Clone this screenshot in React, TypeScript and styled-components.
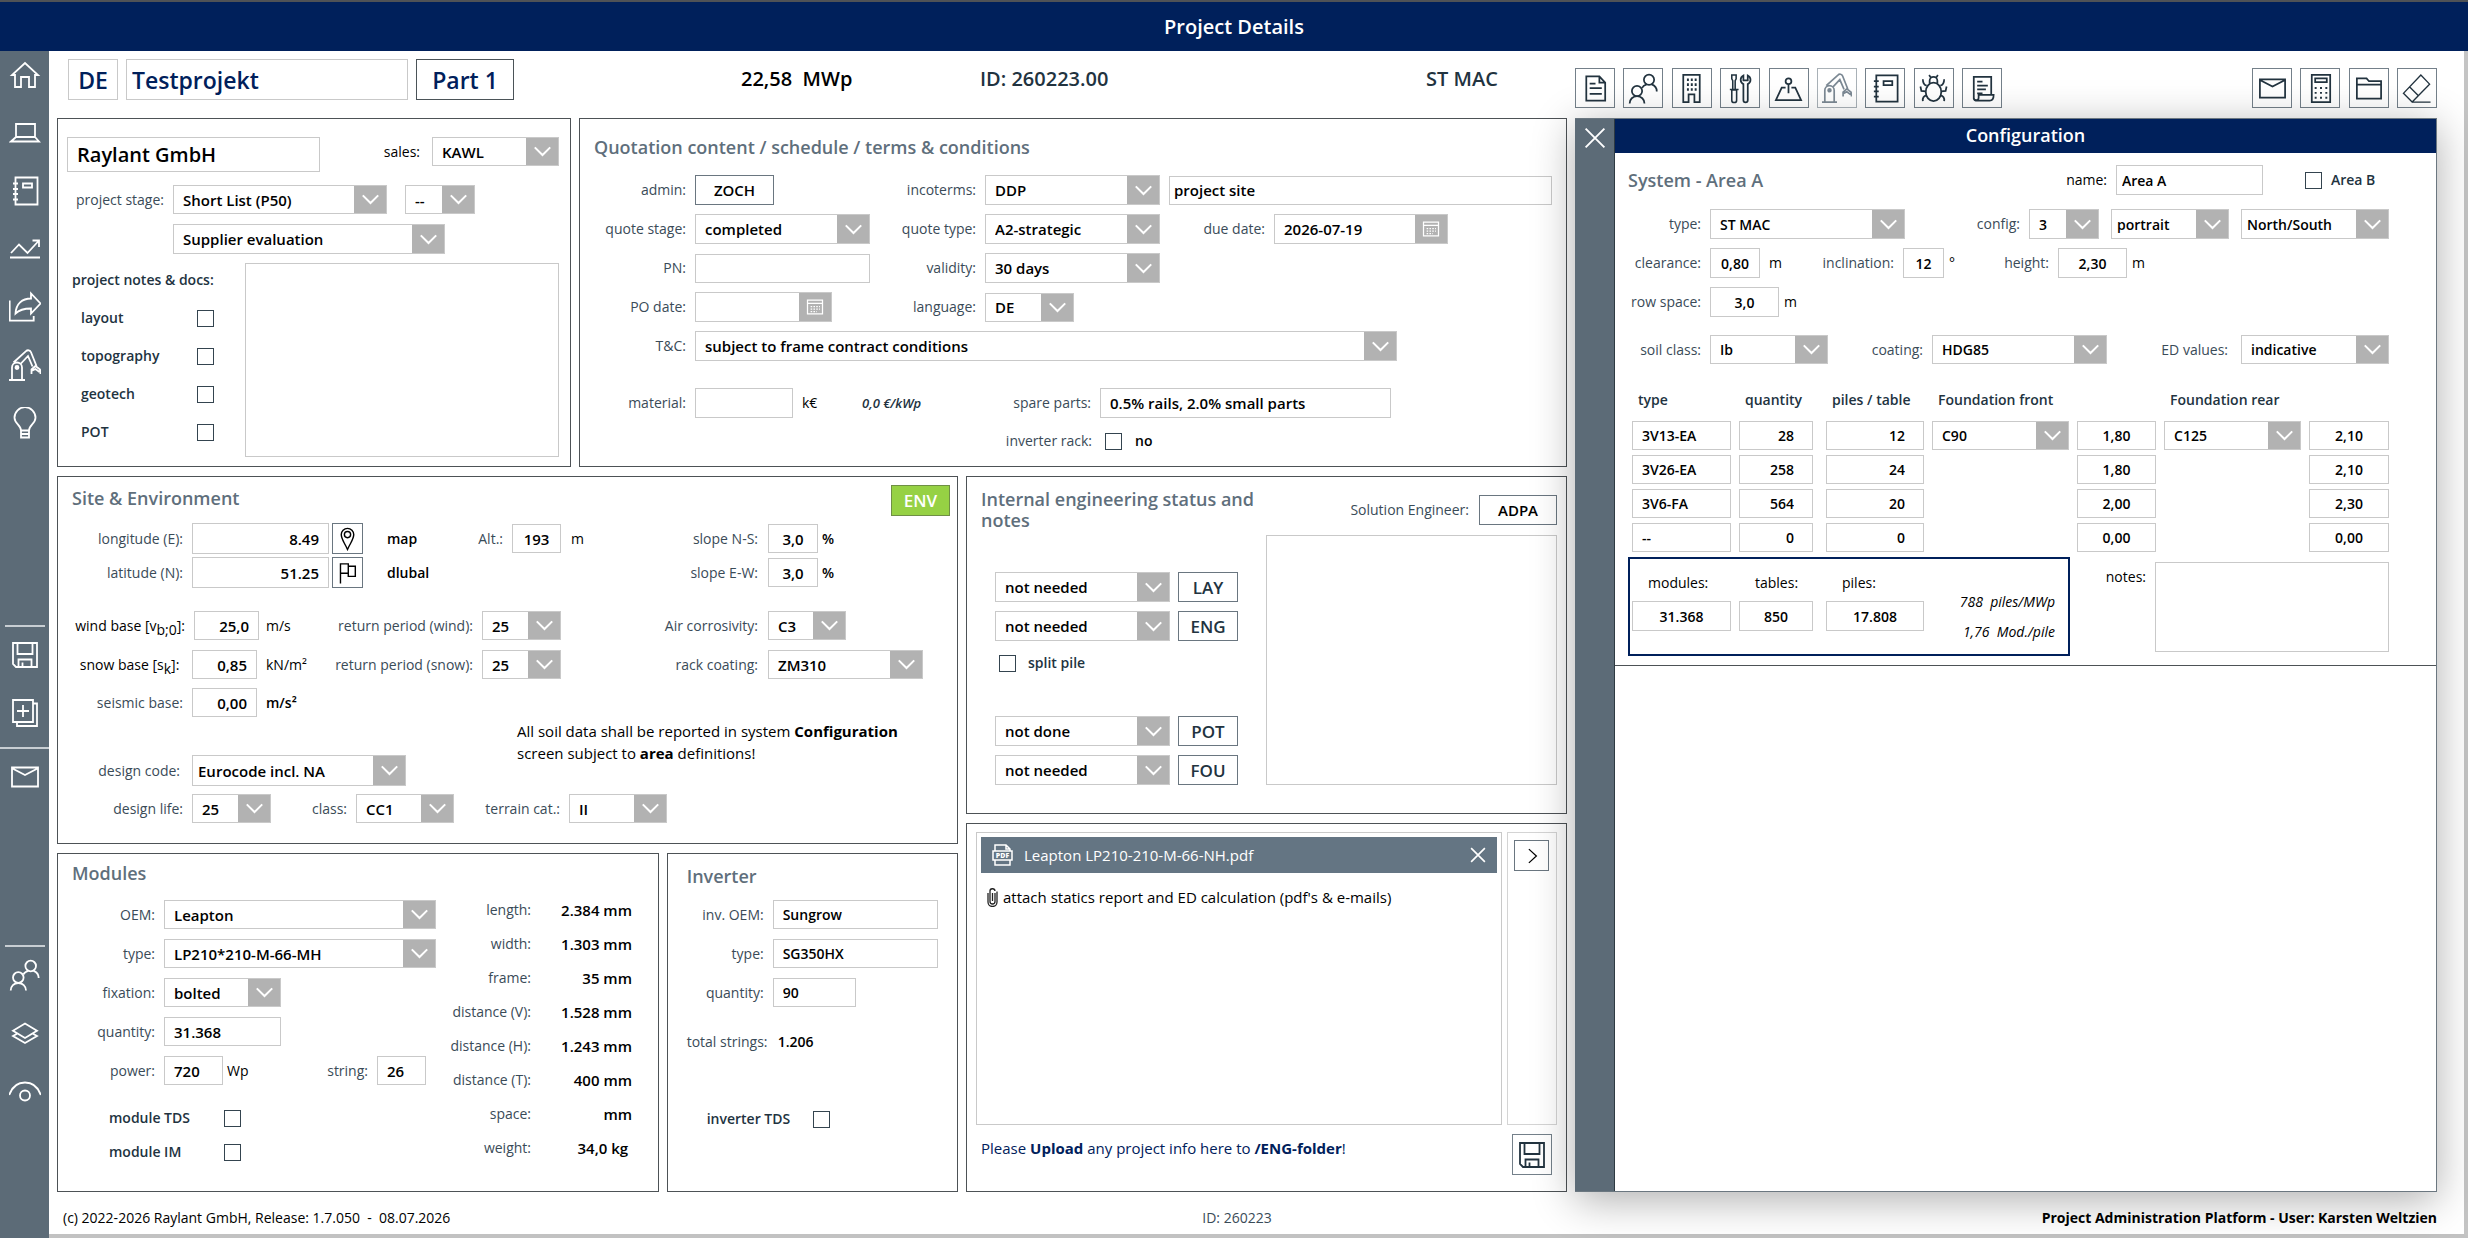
import React from "react";
import styled, { createGlobalStyle, css } from "styled-components";

const navy = "#00205b";
const slate = "#5c6b77";
const ink = "#22333f";
const labelInk = "#3a4b58";
const line = "#c9c9c9";

const GlobalStyle = createGlobalStyle`
  *, *::before, *::after { box-sizing: border-box; }
  body { margin: 0; background: #fff; color: #000; }
  body, input, button, select, textarea { font-family: "Open Sans", "Noto Sans", sans-serif; }
`;

/* ---------- shell ---------- */

const Page = styled.div`
  min-height: 100vh;
  display: flex;
  flex-direction: column;
  border-top: 2px solid #4f5256;
  font-size: 14px;
`;
const TopBar = styled.header`
  height: 49px;
  background: ${navy};
  display: flex;
  align-items: center;
  justify-content: center;
`;
const PageTitle = styled.h1`
  margin: 0;
  color: #fff;
  font-size: 20px;
  font-weight: 600;
`;
const Shell = styled.div`
  flex: 1;
  display: flex;
`;
const Main = styled.main`
  flex: 1;
  min-width: 0;
  display: flex;
  flex-direction: column;
  padding: 8px 27px 0 8px;
  border-right: 4px solid #c4c4c4;
  border-bottom: 4px solid #c2c2c2;
`;
const Footer = styled.footer`
  height: 42px;
  display: grid;
  grid-template-columns: 1fr auto 1fr;
  align-items: center;
  padding: 10px 0 0 6px;
  line-height: 20px;
`;
const FooterId = styled.span`
  color: ${labelInk};
  padding-right: 26px;
`;
const FooterUser = styled.span`
  text-align: right;
  font-weight: 700;
`;

/* ---------- side navigation ---------- */

const Side = styled.nav`
  width: 49px;
  background: ${slate};
  display: flex;
  flex-direction: column;
`;
const SideGroup = styled.div`
  display: flex;
  flex-direction: column;
  align-items: center;
  gap: 10px;
`;
const SideSpace = styled.div<{ $grow: number }>`
  flex: ${(p) => p.$grow} 0 0;
`;
const SideRule = styled.hr<{ $full?: boolean }>`
  width: ${(p) => (p.$full ? "100%" : "40px")};
  height: 2px;
  margin: 0 0 -6px;
  border: 0;
  background: #c8ced3;
`;
const SideButton = styled.button`
  width: 48px;
  height: 48px;
  padding: 0;
  border: 0;
  background: none;
  color: #fff;
  display: grid;
  place-items: center;
`;

/* ---------- general parts ---------- */

const Columns = styled.div`
  flex: 1;
  display: grid;
  grid-template-columns: 1510fr 862fr;
  column-gap: 8px;
`;
const Stack = styled.div`
  display: flex;
  flex-direction: column;
  gap: 9px;
  min-width: 0;
`;
const Split = styled.div<{ $cols: string; $grow?: boolean }>`
  display: grid;
  grid-template-columns: ${(p) => p.$cols};
  gap: 8px;
  ${(p) => p.$grow && "flex: 1;"}
`;
const Panel = styled.section<{ $pad: string; $grow?: boolean }>`
  border: 1px solid #4d5256;
  padding: ${(p) => p.$pad};
  min-width: 0;
  display: flex;
  flex-direction: column;
  ${(p) => p.$grow && "flex: 1;"}
`;
const Heading = styled.h2<{ $w?: number }>`
  margin: 0;
  color: #5f6f7c;
  font-size: 18px;
  line-height: 21px;
  font-weight: 600;
  ${(p) => p.$w && `width: ${p.$w}px;`}
`;
const Row = styled.div<{ $mt?: number; $gap?: number; $h?: number; $align?: string; $spread?: boolean }>`
  display: flex;
  align-items: ${(p) => p.$align ?? "center"};
  gap: ${(p) => p.$gap ?? 9}px;
  margin-top: ${(p) => p.$mt ?? 0}px;
  ${(p) => p.$h && `min-height: ${p.$h}px;`}
  ${(p) => p.$spread && "justify-content: space-between;"}
`;
const Rows = styled.div<{ $gap: number; $mt?: number }>`
  display: flex;
  flex-direction: column;
  gap: ${(p) => p.$gap}px;
  margin-top: ${(p) => p.$mt ?? 0}px;
`;
const labelText = css<{ $w?: number; $dark?: boolean; $strong?: boolean; $left?: boolean }>`
  flex: none;
  font-size: 14px;
  line-height: 20px;
  white-space: nowrap;
  color: ${(p) => (p.$strong ? ink : p.$dark ? "#000" : labelInk)};
  font-weight: ${(p) => (p.$strong ? 600 : 400)};
  text-align: ${(p) => (p.$left ? "left" : "right")};
  ${(p) => p.$w && `width: ${p.$w}px;`}
  sub { line-height: 0; font-size: 14px; }
`;
const Label = styled.label`
  ${labelText}
`;
const NotesLabel = styled(Label)`
  padding: 7px 0 0 5px;
`;
const Caption = styled.span`
  ${labelText}
`;
const Unit = styled.span<{ $bold?: boolean; $w?: number }>`
  font-size: 14px;
  line-height: 20px;
  white-space: nowrap;
  color: #000;
  font-weight: ${(p) => (p.$bold ? 600 : 400)};
  ${(p) => p.$w && `width: ${p.$w}px;`}
`;
const Remark = styled.em`
  width: 66px;
  font-size: 13px;
  line-height: 20px;
  color: ${ink};
  font-weight: 600;
`;
const TextBox = styled.input<{ $w?: number; $h?: number; $small?: boolean; $align?: string; $pad?: number }>`
  flex: ${(p) => (p.$w ? "none" : "1")};
  width: ${(p) => (p.$w ? `${p.$w}px` : "100%")};
  min-width: 0;
  height: ${(p) => p.$h ?? 29}px;
  border: 1px solid ${line};
  border-radius: 0;
  background: transparent;
  color: #000;
  font-size: ${(p) => (p.$small ? 14 : 15)}px;
  font-weight: 600;
  padding: 0 ${(p) => p.$pad ?? 9}px;
  text-align: ${(p) => p.$align ?? "left"};
`;
const HeadBox = styled(TextBox)`
  height: 41px;
  padding: 0 5px;
  font-size: 23px;
  color: ${navy};
`;
const CompanyBox = styled(TextBox)`
  height: 35px;
  font-size: 20px;
`;
const Area = styled.textarea<{ $w?: number; $h?: number }>`
  flex: ${(p) => (p.$w ? "none" : "1")};
  ${(p) => p.$w && `width: ${p.$w}px;`}
  ${(p) => p.$h && `height: ${p.$h}px;`}
  min-width: 0;
  border: 1px solid ${line};
  background: transparent;
  resize: none;
  font-size: 14px;
  display: block;
`;
const Picker = styled.span<{ $w?: number; $h?: number }>`
  flex: none;
  display: inline-flex;
  vertical-align: top;
  width: ${(p) => (p.$w ? `${p.$w}px` : "100%")};
  height: ${(p) => p.$h ?? 29}px;
  border: 1px solid ${line};
  background: #fff;
`;
const pickerField = css<{ $small?: boolean; $pad?: number }>`
  flex: 1;
  min-width: 0;
  width: 100%;
  appearance: none;
  border: 0;
  border-radius: 0;
  background: none;
  color: #000;
  font-size: ${(p) => (p.$small ? 14 : 15)}px;
  font-weight: 600;
  padding: 0 0 0 ${(p) => p.$pad ?? 9}px;
`;
const PickerSelect = styled.select`
  ${pickerField}
`;
const PickerInput = styled.input`
  ${pickerField}
`;
const PickerMark = styled.span`
  flex: none;
  width: 32px;
  background: #b2b2b2;
  color: #fff;
  display: grid;
  place-items: center;
`;
const Tick = styled.input.attrs({ type: "checkbox" })`
  appearance: none;
  flex: none;
  width: 17px;
  height: 17px;
  margin: 0;
  border: 1px solid #34444f;
  background: #fff;
`;
const Button = styled.button<{ $w: number; $h?: number; $big?: boolean; $tone?: "green" }>`
  flex: none;
  width: ${(p) => p.$w}px;
  height: ${(p) => p.$h ?? 30}px;
  padding: 0;
  border: 1px solid ${(p) => (p.$tone ? "#6f8f45" : "#6a7680")};
  background: ${(p) => (p.$tone ? "#96d144" : "transparent")};
  color: ${(p) => (p.$tone ? "#fff" : p.$big ? ink : "#000")};
  font-size: ${(p) => (p.$big ? 17 : 15)}px;
  font-weight: 600;
  display: grid;
  place-items: center;
`;
const PartButton = styled(Button)`
  border-color: #4b5358;
  color: ${navy};
  font-size: 23px;
`;
const ToolButton = styled(Button)<{ $faded?: boolean }>`
  background: #fff;
  color: ${(p) => (p.$faded ? "#7c8994" : ink)};
  border-color: ${(p) => (p.$faded ? "#a9b1b7" : "#74808a")};
`;

/* ---------- head line ---------- */

const HeadLine = styled.div`
  display: grid;
  grid-template-columns: 1510fr 862fr;
  column-gap: 8px;
  height: 59px;
`;
const HeadLeft = styled.div`
  display: flex;
  align-items: flex-start;
  padding-left: 11px;
  gap: 8px;
`;
const HeadFigure = styled.span<{ $w: number; $dark?: boolean }>`
  width: ${(p) => p.$w}px;
  font-size: 20px;
  line-height: 40px;
  font-weight: 600;
  white-space: pre;
  color: ${(p) => (p.$dark ? "#000" : ink)};
`;
const HeadFigures = styled.div`
  flex: 1;
  display: flex;
  justify-content: flex-end;
  padding-right: 65px;
`;
const Tools = styled.div`
  display: flex;
  justify-content: space-between;
  padding-top: 9px;
`;
const ToolSet = styled.div<{ $w: number }>`
  width: ${(p) => p.$w}px;
  display: flex;
  justify-content: space-between;
`;

/* ---------- panels ---------- */

const CheckLine = styled.div`
  display: flex;
  justify-content: space-between;
  align-items: center;
  height: 20px;
  padding-left: 14px;
`;
const QuoteGrid = styled.div`
  display: grid;
  grid-template-columns: 92px 175px 97px 175px 1fr;
  grid-auto-rows: 30px;
  gap: 9px;
  align-items: center;
  margin-top: 17px;
`;
const Wide = styled.div`
  grid-column: 2 / -1;
`;
const SiteRow = styled.div<{ $mt?: number; $h: number }>`
  display: grid;
  grid-template-columns: 489px 197px auto;
  align-items: center;
  justify-content: start;
  height: ${(p) => p.$h}px;
  margin-top: ${(p) => p.$mt ?? 0}px;
`;
const Between = styled.div`
  display: flex;
  align-items: center;
  justify-content: space-between;
  &:nth-child(2) { padding-left: 10px; }
  &:nth-child(3) { padding-left: 10px; gap: 4px; }
`;
const SoilNote = styled.p`
  margin: 0 0 0 111px;
  align-self: flex-start;
  font-size: 15px;
  line-height: 22px;
  b { font-weight: 700; }
`;
const SpecList = styled.dl`
  margin: 0;
  display: grid;
  grid-template-columns: 95px 101px;
  grid-auto-rows: 34px;
  line-height: 20px;
  text-align: right;
  dt { color: ${labelInk}; }
  dd { margin: 0; font-size: 15px; font-weight: 600; white-space: nowrap; }
`;
const StringField = styled.div`
  display: flex;
  align-items: center;
  gap: 9px;
  padding-right: 10px;
`;
const Status = styled.div`
  display: flex;
  flex-direction: column;
  width: 285px;
`;
const StatusSide = styled.div`
  flex: 1;
  display: flex;
  flex-direction: column;
  gap: 10px;
`;
const SplitPile = styled.div`
  display: flex;
  align-items: center;
  gap: 12px;
  margin-top: 3px;
  padding-left: 4px;
`;
const UploadGrid = styled.div`
  flex: 1;
  display: grid;
  grid-template-columns: 1fr 50px;
  grid-template-rows: 1fr 41px;
  gap: 9px 5px;
`;
const FileBox = styled.div`
  border: 1px solid ${line};
  padding: 4px;
`;
const FileBar = styled.div`
  height: 36px;
  background: #647583;
  color: #fff;
  display: flex;
  align-items: center;
  gap: 11px;
  padding: 0 8px 0 11px;
  font-size: 15px;
  span { flex: 1; }
`;
const PlainButton = styled.button`
  padding: 0;
  border: 0;
  background: none;
  color: inherit;
  display: grid;
  place-items: center;
`;
const AttachLine = styled.p`
  margin: 14px 0 0 5px;
  display: flex;
  align-items: center;
  gap: 5px;
  font-size: 15px;
  line-height: 20px;
`;
const FileSide = styled.div`
  border: 1px solid #d4d4d4;
  padding: 7px 6px;
`;
const UploadNote = styled.p`
  margin: 3px 0 0 5px;
  color: ${navy};
  font-size: 15px;
  line-height: 22px;
  b { font-weight: 700; }
`;
const SaveCell = styled.div`
  display: flex;
  justify-content: flex-end;
  padding-right: 5px;
`;

/* ---------- configuration drawer ---------- */

const Drawer = styled.aside`
  display: flex;
  background: #fff;
  border: 1px solid #6b7780;
  border-left: 0;
  box-shadow: 0 8px 40px rgba(0, 0, 0, 0.32);
`;
const DrawerEdge = styled.div`
  width: 40px;
  background: ${slate};
  border-right: 1px solid #2e3a42;
  color: #fff;
  display: flex;
  justify-content: center;
  align-items: flex-start;
  padding-top: 4px;
`;
const DrawerBody = styled.div`
  flex: 1;
`;
const DrawerTitle = styled.h2`
  margin: 0;
  height: 34px;
  background: ${navy};
  color: #fff;
  font-size: 18px;
  line-height: 33px;
  font-weight: 600;
  text-align: center;
`;
const DrawerForm = styled.form`
  padding: 12px 14px 9px 13px;
  border-bottom: 1px solid #4d5256;
`;
const PileTable = styled.table`
  table-layout: fixed;
  width: 757px;
  margin: 26px 0 0 4px;
  border-collapse: collapse;
  th {
    padding: 0;
    height: 22px;
    font-size: 14px;
    line-height: 20px;
    font-weight: 600;
    color: ${ink};
    text-align: left;
    vertical-align: top;
    white-space: nowrap;
  }
  th:nth-child(-n + 5) { padding-left: 6px; }
  td { padding: 0; height: 34px; vertical-align: top; }
`;
const TableHead = styled.thead`
  &::after { content: ""; display: block; height: 9px; }
`;
const Summary = styled.div`
  width: 442px;
  height: 99px;
  border: 2px solid ${navy};
  padding: 14px 13px 0 2px;
  display: grid;
  grid-template-columns: 107px 87px 98px 1fr;
  grid-template-rows: 20px 30px;
  row-gap: 8px;
  font-size: 14px;
  label { text-align: left; padding-left: 16px; line-height: 20px; }
`;
const SummaryRates = styled.div`
  grid-column: 4;
  grid-row: 1 / 3;
  padding-top: 14px;
  text-align: right;
  font-style: italic;
  font-size: 14px;
  line-height: 30px;
  white-space: pre;
`;
const DrawerNotesLabel = styled(Label)`
  padding-top: 5px;
`;

/* ---------- icons ---------- */

type IconProps = { size?: number; sw?: number; children: React.ReactNode };
const Icon = ({ size = 32, sw = 1.8, children }: IconProps) => (
  <svg width={size} height={size} viewBox="-1 -1 32 32" fill="none" stroke="currentColor" strokeWidth={sw} aria-hidden="true">
    {children}
  </svg>
);
const icons: Record<string, React.ReactNode> = {
  home: <path d="M5 27V15H2L15 3l13 12h-3v12h-6V17h-8v10z" />,
  laptop: <path d="M6 6h19v13H6zM6 19l-5 4.5h28L25 19" />,
  notebook: <path d="M5.5 1.5h22v27h-22zM13 7.5h9v4h-9zM3 7.5h5M3 13h5M3 18h5M3 23.5h5" />,
  chart: <path d="M1 19l8-8.5 8.5 8.5L29 6.5M22.5 6.5H29V13M0 23.5h30" />,
  share: <path d="M-.3 8.500v20.200h24V24M5.500 21.500C6 12 12 6.500 21 6.500v-5l9.500 10-9.500 10v-5c-7 0-12 1.500-15.500 5z" />,
  robot: (
    <>
      <path d="M-1 30h16M2 30V17.500a5 5 0 0 1 10 0V30M3.500 12.500L16 1.200a3 3 0 0 1 5 1L26.500 16M10.500 14l7.500-8 4.500 10.500M21.500 24v-4.500l4-3.500 4.500 3.500.5 4.500M21.500 21l4-2 4 3" />
      <circle cx="7" cy="17.500" r="1.500" fill="currentColor" />
    </>
  ),
  bulb: <path d="M11 22.500C11 17 4.500 15.500 4.500 9.700a10.500 10.500 0 0 1 21 0c0 5.800-6.500 7.300-6.500 12.800zM11 22.500v7h8v-7M11 26h8" />,
  save: <path d="M3 3h24v24H6l-3-3zM7.500 3v11h15V3M8.500 27v-7.500h13V27M12.500 27v-4.500" />,
  copy: <path d="M3 2h20v22H3zM23 5.500h4V28H7v-4M13 7v12M7 13h12" />,
  mail: <path d="M2 5.500h26v19H2zM2.500 6.500L15 13l12.500-6.500" />,
  people: (
    <>
      <circle cx="20.700" cy="6" r="5.300" />
      <circle cx="8.300" cy="17.500" r="5.300" />
      <path d="M13.500 14.500c.8-2 2.500-3 4.700-3.700M23.500 10.800c3.200 1.200 5.200 3.700 5.200 7.200M.7 30.500c0-4.500 3.300-7.500 7.600-7.500S16 26 16 30.500" />
    </>
  ),
  layers: <path d="M3 12.700l12-7.200 12 7.200L15 20zM7.500 15.500L3 18l12 7 12-7-4.500-2.500" />,
  eye: (
    <>
      <path d="M-.8 19C2 11 8 6.500 15 6.500S28 11 30.800 19" />
      <circle cx="15" cy="19.500" r="5" />
    </>
  ),
  doc: <path d="M5.500 2.500h13.500l6 6.500v18.500H5.500zM19 2.500V9h6M9 10h6M9 14.500h12.500M9 20.500h12.500" />,
  building: (
    <>
      <path d="M6.500 1h17v28h-5.500v-8h-6v8H6.500z" />
      <path d="M10.300 6h10M10.300 11h10M10.300 16h10" strokeDasharray="2 2" strokeWidth="2.600" />
    </>
  ),
  tools: (
    <>
      <path d="M6 1h4.500v4L9.500 7v9h-2.500V7L6 5zM4 16h9M6 16.500h5V27a2.500 2.500 0 0 1-5 0z" strokeWidth="1.600" />
      <path d="M18 10.500V27a2 2 0 0 0 4.500 0V10.500a5 5 0 0 0 0-9V6.500H18V1.500a5 5 0 0 0 0 9z" />
    </>
  ),
  joystick: (
    <>
      <circle cx="15" cy="7.500" r="3" />
      <path d="M15 10.500V20M12 14H8L2 27h26l-6-13h-4" />
    </>
  ),
  bug: (
    <>
      <ellipse cx="15" cy="18.500" rx="8" ry="9.500" />
      <path d="M11 10V7a4 4 0 0 1 8 0v3M12 3.500L10.500 1M18 3.500L19.500 1M8 12c-3-.5-4-3-4-6.500M22 12c3-.5 4-3 4-6.500M7 18l-4.500-.5L1.500 13M23 18l4.500-.5 1-4.500M8 22c-3 .5-4.500 2.500-4 6M22 22c3 .5 4.500 2.500 4 6" />
    </>
  ),
  scroll: <path d="M6 25V3h18v18.500M9.500 8H15M9.500 12h11M9.500 16h9M9.500 20H15M11 24.500v-3h15.500c0 4-1 6-4 6H8a2.500 2.500 0 0 1-2-3c0 3.500 5 3.500 5 0" />,
  calc: (
    <>
      <path d="M6 1h19v28H6zM9.500 4.500H21.500v4h-12z" />
      <path d="M9 14.500h13M9 19.500h13M9 24.500h13" strokeDasharray="2 3.500" strokeWidth="2" />
    </>
  ),
  folder: <path d="M3 25.500V4.500h10l2.500 3H28v18zM3 11h25" />,
  eraser: <path d="M1.500 20L19.500 1l9 9.500-18 18.500zM8 13.500l9 9M10.500 29h19" strokeWidth="1.400" />,
  pin: (
    <>
      <path d="M15 29C11 20 7 16 7 10a8 8 0 0 1 16 0c0 6-4 10-8 19z" />
      <circle cx="15" cy="10" r="4" />
    </>
  ),
  flag: <path d="M6 29V4h10v12H6M16 7h9v13h-9v-4" />,
  close: <path d="M5 5l20 20M25 5L5 25" />,
  right: <path d="M10 4l12 11-12 11" />,
  calendar: (
    <>
      <path d="M3 4h24v22H3zM3 9h24" />
      <path d="M8 14.500h15M8 18.500h15M8 22.500h10" strokeDasharray="2.500 2" strokeWidth="2" />
    </>
  ),
  chevron: <path d="M2 8l13 13L28 8" />,
};

const Chevron = () => (
  <Icon size={19} sw={3.4}>
    {icons.chevron}
  </Icon>
);

const PdfIcon = () => (
  <svg width="21" height="22" viewBox="0 0 21 22" fill="none" stroke="currentColor" strokeWidth="1.500" aria-hidden="true">
    <path d="M3 7V1h11l4 4v2M14 1v4h4M3 16v5h15v-5M1 7h19v9H1z" />
    <text x="10.500" y="14" fill="currentColor" stroke="none" fontSize="7" fontWeight="800" textAnchor="middle" fontFamily="Open Sans">
      PDF
    </text>
  </svg>
);

const ClipIcon = () => (
  <svg width="12" height="20" viewBox="0 0 12 20" fill="none" stroke="#222" strokeWidth="1.300" aria-hidden="true">
    <path d="M6.500 6v8M9 6v8.500a2.500 2.500 0 0 1-5 0V4.500a2.500 2.500 0 0 1 5-.5M2 6v9a4 4 0 0 0 9 0V4.500" />
  </svg>
);

/* ---------- composed controls ---------- */

type SelectProps = { id?: string; name?: string; value: string; w?: number; h?: number; small?: boolean; pad?: number };
const Select = ({ id, name, value, w, h, small, pad }: SelectProps) => (
  <Picker $w={w} $h={h}>
    <PickerSelect id={id} aria-label={name} $small={small} $pad={pad} defaultValue={value}>
      <option>{value}</option>
    </PickerSelect>
    <PickerMark>
      <Chevron />
    </PickerMark>
  </Picker>
);
const DateBox = ({ id, value, w }: { id: string; value: string; w: number }) => (
  <Picker $w={w} $h={30}>
    <PickerInput id={id} defaultValue={value} />
    <PickerMark>
      <Icon size={20} sw={2}>
        {icons.calendar}
      </Icon>
    </PickerMark>
  </Picker>
);

const SideItems = ({ names }: { names: string[] }) => (
  <>
    {names.map((n) => (
      <SideButton key={n} aria-label={n}>
        <Icon>{icons[n]}</Icon>
      </SideButton>
    ))}
  </>
);

const ToolItems = ({ names, w }: { names: string[]; w: number }) => (
  <ToolSet $w={w}>
    {names.map((n) => (
      <ToolButton key={n} aria-label={n} $w={40} $h={40} $faded={n === "robot"}>
        <Icon size={n === "robot" ? 30 : 31}>{icons[n]}</Icon>
      </ToolButton>
    ))}
  </ToolSet>
);

/* ---------- panels with content ---------- */

const CustomerPanel = () => (
  <Panel $pad="18px 11px 9px 9px">
    <Row $align="flex-start" $spread>
      <CompanyBox $w={253} aria-label="customer" defaultValue="Raylant GmbH" />
      <Row $gap={12}>
        <Label htmlFor="sales" $dark>sales:</Label>
        <Select id="sales" value="KAWL" w={127} />
      </Row>
    </Row>
    <Row $mt={13}>
      <Label htmlFor="stage" $w={97}>project stage:</Label>
      <Select id="stage" value="Short List (P50)" w={214} />
      <Row $gap={0}>
        <Caption $w={9} />
        <Select name="stage detail" value="--" w={70} />
      </Row>
    </Row>
    <Row $mt={10}>
      <Caption $w={97} />
      <Select name="stage note" value="Supplier evaluation" w={272} h={30} />
    </Row>
    <Row $mt={9} $gap={31} $align="stretch">
      <Rows $gap={18}>
        <NotesLabel htmlFor="notes" $strong $left $w={147}>project notes &amp; docs:</NotesLabel>
        {["layout", "topography", "geotech", "POT"].map((t) => (
          <CheckLine key={t}>
            <Label htmlFor={`doc-${t}`} $strong>{t}</Label>
            <Tick id={`doc-${t}`} />
          </CheckLine>
        ))}
      </Rows>
      <Area id="notes" $h={194} />
    </Row>
  </Panel>
);

const QuotePanel = () => (
  <Panel $pad="18px 14px 15px 14px">
    <Heading>Quotation content / schedule / terms &amp; conditions</Heading>
    <QuoteGrid>
      <Caption>admin:</Caption>
      <Button $w={79}>ZOCH</Button>
      <Label htmlFor="inco">incoterms:</Label>
      <Select id="inco" value="DDP" h={30} />
      <TextBox aria-label="place" $pad={4} defaultValue="project site" />
      <Label htmlFor="qstage">quote stage:</Label>
      <Select id="qstage" value="completed" h={30} />
      <Label htmlFor="qtype">quote type:</Label>
      <Select id="qtype" value="A2-strategic" h={30} />
      <Row>
        <Label htmlFor="due" $w={96}>due date:</Label>
        <DateBox id="due" value="2026-07-19" w={174} />
      </Row>
      <Label htmlFor="pn">PN:</Label>
      <TextBox id="pn" />
      <Label htmlFor="valid">validity:</Label>
      <Select id="valid" value="30 days" h={30} />
      <span />
      <Label htmlFor="po">PO date:</Label>
      <DateBox id="po" value="" w={137} />
      <Label htmlFor="lang">language:</Label>
      <Select id="lang" value="DE" w={89} />
      <span />
      <Label htmlFor="tc">T&amp;C:</Label>
      <Wide>
        <Select id="tc" value="subject to frame contract conditions" w={702} h={30} />
      </Wide>
    </QuoteGrid>
    <Row $mt={27}>
      <Label htmlFor="material" $w={92}>material:</Label>
      <TextBox id="material" $w={98} $h={30} />
      <Unit $w={51}>k€</Unit>
      <Remark>0,0 €/kWp</Remark>
      <Label htmlFor="spare" $w={154}>spare parts:</Label>
      <TextBox id="spare" $w={291} $h={30} defaultValue="0.5% rails, 2.0% small parts" />
    </Row>
    <Row $mt={13} $gap={13}>
      <Label htmlFor="rack" $w={498}>inverter rack:</Label>
      <Tick id="rack" />
      <Unit $bold>no</Unit>
    </Row>
  </Panel>
);

const SitePanel = () => (
  <Panel $pad="8px 7px 20px 14px">
    <Row $spread $align="flex-start">
      <Row $mt={3}>
        <Heading>Site &amp; Environment</Heading>
      </Row>
      <Button $w={59} $h={31} $big $tone="green">ENV</Button>
    </Row>
    <SiteRow $h={31} $mt={7}>
      <Between>
        <Row>
          <Label htmlFor="lon" $w={111}>longitude (E):</Label>
          <Row $gap={3}>
            <TextBox id="lon" $w={137} $h={31} $align="right" defaultValue="8.49" />
            <Button $w={31} $h={31} aria-label="open map"><Icon size={25}>{icons.pin}</Icon></Button>
          </Row>
          <Row $gap={0}><Caption $w={15} /><Unit $bold>map</Unit></Row>
        </Row>
        <Row><Label htmlFor="alt">Alt.:</Label><TextBox id="alt" $w={49} defaultValue="193" $align="center" $pad={2} /></Row>
      </Between>
      <Between><Unit>m</Unit><Label htmlFor="sns">slope N-S:</Label></Between>
      <Between><TextBox id="sns" $w={50} $pad={2} $align="center" defaultValue="3,0" /><Unit $bold>%</Unit></Between>
    </SiteRow>
    <SiteRow $h={31} $mt={3}>
      <Row>
        <Label htmlFor="lat" $w={111}>latitude (N):</Label>
        <Row $gap={3}>
          <TextBox id="lat" $w={137} $h={31} $align="right" defaultValue="51.25" />
          <Button $w={31} $h={31} aria-label="open snow map"><Icon size={25}>{icons.flag}</Icon></Button>
        </Row>
        <Row $gap={0}><Caption $w={15} /><Unit $bold>dlubal</Unit></Row>
      </Row>
      <Between><span /><Label htmlFor="sew">slope E-W:</Label></Between>
      <Between><TextBox id="sew" $w={50} $pad={2} $align="center" defaultValue="3,0" /><Unit $bold>%</Unit></Between>
    </SiteRow>
    <SiteRow $h={29} $mt={23}>
      <Between>
        <Row>
          <Label htmlFor="wind" $dark $w={113}>wind base [v<sub>b;0</sub>]:</Label>
          <Row $gap={7}>
            <TextBox id="wind" $w={65} $align="right" defaultValue="25,0" />
            <Unit>m/s</Unit>
          </Row>
        </Row>
        <Row><Label htmlFor="rpw">return period (wind):</Label><Select id="rpw" value="25" w={79} /></Row>
      </Between>
      <Between><span /><Label htmlFor="air">Air corrosivity:</Label></Between>
      <Between><Select id="air" value="C3" w={78} /></Between>
    </SiteRow>
    <SiteRow $h={29} $mt={10}>
      <Between>
        <Row>
          <Label htmlFor="snow" $dark $w={111}>snow base [s<sub>k</sub>]:&nbsp;</Label>
          <TextBox id="snow" $w={65} $align="right" defaultValue="0,85" />
          <Unit>kN/m²</Unit>
        </Row>
        <Row><Label htmlFor="rps">return period (snow):</Label><Select id="rps" value="25" w={79} /></Row>
      </Between>
      <Between><span /><Label htmlFor="coat">rack coating:</Label></Between>
      <Between><Select id="coat" value="ZM310" w={155} /></Between>
    </SiteRow>
    <Row $mt={9}>
      <Label htmlFor="seis" $w={111}>seismic base:</Label>
      <TextBox id="seis" $w={65} $align="right" defaultValue="0,00" />
      <Unit $bold>m/s²</Unit>
    </Row>
    <Row $mt={3} $gap={0} $h={66} $align="flex-end">
      <Row $gap={12}>
        <Label htmlFor="code" $w={108}>design code:</Label>
        <Select id="code" value="Eurocode incl. NA" w={214} h={31} pad={5} />
      </Row>
      <SoilNote>
        All soil data shall be reported in system <b>Configuration</b>
        <br />
        screen subject to <b>area</b> definitions!
      </SoilNote>
    </Row>
    <Row $mt={8}>
      <Label htmlFor="life" $w={111}>design life:</Label>
      <Select id="life" value="25" w={79} />
      <Label htmlFor="class" $w={67}>class:</Label>
      <Select id="class" value="CC1" w={98} />
      <Label htmlFor="terrain" $w={97}>terrain cat.:</Label>
      <Select id="terrain" value="II" w={98} />
    </Row>
  </Panel>
);

const specs = [
  ["length:", "2.384 mm"],
  ["width:", "1.303 mm"],
  ["frame:", "35 mm"],
  ["distance (V):", "1.528 mm"],
  ["distance (H):", "1.243 mm"],
  ["distance (T):", "400 mm"],
  ["space:", "mm"],
  ["weight:", "34,0 kg\u00a0"],
];

const ModulesPanel = () => (
  <Panel $pad="9px 14px 14px 14px">
    <Heading>Modules</Heading>
    <Row $gap={0} $align="flex-start" $mt={16}>
      <Rows $gap={10}>
        <Row><Label htmlFor="oem" $w={83}>OEM:</Label><Select id="oem" value="Leapton" w={272} /></Row>
        <Row><Label htmlFor="mtype" $w={83}>type:</Label><Select id="mtype" value="LP210*210-M-66-MH" w={272} /></Row>
        <Row><Label htmlFor="fix" $w={83}>fixation:</Label><Select id="fix" value="bolted" w={117} /></Row>
        <Row><Label htmlFor="mqty" $w={83}>quantity:</Label><TextBox id="mqty" $w={117} defaultValue="31.368" /></Row>
        <Row $spread>
          <Row>
            <Label htmlFor="power" $w={83}>power:</Label>
            <Row $gap={4}><TextBox id="power" $w={59} defaultValue="720" /><Unit>Wp</Unit></Row>
          </Row>
          <StringField><Label htmlFor="string">string:</Label><TextBox id="string" $w={49} defaultValue="26" /></StringField>
        </Row>
        <Rows $gap={14} $mt={13}>
          <Row $gap={0}><Caption $w={37} /><Label htmlFor="mtds" $strong $left $w={115}>module TDS</Label><Tick id="mtds" /></Row>
          <Row $gap={0}><Caption $w={37} /><Label htmlFor="mim" $strong $left $w={115}>module IM</Label><Tick id="mim" /></Row>
        </Rows>
      </Rows>
      <SpecList>
        {specs.map(([k, v]) => (
          <React.Fragment key={k}>
            <dt>{k}</dt>
            <dd>{v}</dd>
          </React.Fragment>
        ))}
      </SpecList>
    </Row>
  </Panel>
);

const InverterPanel = () => (
  <Panel $pad="12px 14px 14px 19px">
    <Heading>Inverter</Heading>
    <Rows $gap={10} $mt={13}>
      <Row><Label htmlFor="ioem" $w={77}>inv. OEM:</Label><TextBox id="ioem" $w={165} defaultValue="Sungrow" $small /></Row>
      <Row><Label htmlFor="itype" $w={77}>type:</Label><TextBox id="itype" $w={165} defaultValue="SG350HX" $small /></Row>
      <Row><Label htmlFor="iqty" $w={77}>quantity:</Label><TextBox id="iqty" $w={83} defaultValue="90" $small /></Row>
    </Rows>
    <Row $mt={25} $gap={14}>
      <Caption $w={77}>total strings:</Caption>
      <Unit $bold>1.206</Unit>
    </Row>
    <Row $mt={57} $gap={0}>
      <Caption $w={20} />
      <Label htmlFor="itds" $strong $left $w={106}>inverter TDS</Label>
      <Tick id="itds" />
    </Row>
  </Panel>
);

const StatusLine = ({ code, value }: { code: string; value: string }) => (
  <Row $gap={8}>
    <Select name={`${code} status`} value={value} w={175} h={30} />
    <Button $w={60} $big>{code}</Button>
  </Row>
);

const StatusPanel = () => (
  <Panel $pad="12px 9px 28px 14px">
    <Row $gap={0} $align="stretch">
      <Status>
        <Heading $w={282}>Internal engineering status and notes</Heading>
        <Row $mt={41} $gap={0} $align="flex-start">
          <Caption $w={14} />
          <Rows $gap={9}>
            <StatusLine code="LAY" value="not needed" />
            <StatusLine code="ENG" value="not needed" />
            <SplitPile>
              <Tick id="split" />
              <Label htmlFor="split" $strong>split pile</Label>
            </SplitPile>
            <Rows $gap={9} $mt={34}>
              <StatusLine code="POT" value="not done" />
              <StatusLine code="FOU" value="not needed" />
            </Rows>
          </Rows>
        </Row>
      </Status>
      <StatusSide>
        <Row $spread $mt={6}>
          <span />
          <Row $gap={10}>
            <Caption>Solution Engineer:</Caption>
            <Button $w={78}>ADPA</Button>
          </Row>
        </Row>
        <Area aria-label="engineering notes" />
      </StatusSide>
    </Row>
  </Panel>
);

const UploadPanel = () => (
  <Panel $pad="8px 9px 16px 9px" $grow>
    <UploadGrid>
      <FileBox>
        <FileBar>
          <PdfIcon />
          <span>Leapton LP210-210-M-66-NH.pdf</span>
          <PlainButton aria-label="remove file"><Icon size={22} sw={2.4}>{icons.close}</Icon></PlainButton>
        </FileBar>
        <AttachLine><ClipIcon />attach statics report and ED calculation (pdf's &amp; e-mails)</AttachLine>
      </FileBox>
      <FileSide>
        <Button $w={35} $h={31} aria-label="next file"><Icon size={20} sw={2}>{icons.right}</Icon></Button>
      </FileSide>
      <UploadNote>
        Please <b>Upload</b> any project info here to <b>/ENG-folder</b>!
      </UploadNote>
      <SaveCell>
        <ToolButton $w={40} $h={41} aria-label="save files"><Icon size={32}>{icons.save}</Icon></ToolButton>
      </SaveCell>
    </UploadGrid>
  </Panel>
);

const piles = [
  ["3V13-EA", "28", "12", "C90", "1,80", "C125", "2,10"],
  ["3V26-EA", "258", "24", "", "1,80", "", "2,10"],
  ["3V6-FA", "564", "20", "", "2,00", "", "2,30"],
  ["--", "0", "0", "", "0,00", "", "0,00"],
];

const Configuration = () => (
  <Drawer>
    <DrawerEdge>
      <PlainButton aria-label="close configuration"><Icon size={30} sw={2}>{icons.close}</Icon></PlainButton>
    </DrawerEdge>
    <DrawerBody>
      <DrawerTitle>Configuration</DrawerTitle>
      <DrawerForm>
        <Row>
          <Heading $w={429}>System - Area A</Heading>
          <Label htmlFor="aname" $dark $w={41}>name:</Label>
          <TextBox id="aname" $w={147} $h={30} $small $pad={5} defaultValue="Area A" />
          <Caption $w={24} />
          <Tick id="areab" />
          <Label htmlFor="areab" $strong>Area B</Label>
        </Row>
        <Row $mt={14}>
          <Label htmlFor="ctype" $w={73}>type:</Label>
          <Select id="ctype" value="ST MAC" w={195} h={30} small />
          <Label htmlFor="cfg" $w={106}>config:</Label>
          <Row $gap={12}>
            <Select id="cfg" value="3" w={70} h={30} small />
            <Select name="orientation" value="portrait" w={118} h={30} small pad={5} />
            <Select name="direction" value="North/South" w={148} h={30} small pad={5} />
          </Row>
        </Row>
        <Row $mt={9}>
          <Label htmlFor="clear" $w={73}>clearance:</Label>
          <TextBox id="clear" $w={50} $h={30} $small $pad={2} $align="center" defaultValue="0,80" />
          <Unit $w={12}>m</Unit>
          <Label htmlFor="incl" $w={104}>inclination:</Label>
          <Row $gap={5}>
            <TextBox id="incl" $w={41} $h={30} $small $pad={2} $align="center" defaultValue="12" />
            <Unit $w={9}>°</Unit>
          </Row>
          <Label htmlFor="height" $w={82}>height:</Label>
          <Row $gap={5}>
            <TextBox id="height" $w={69} $h={30} $small $align="center" defaultValue="2,30" />
            <Unit>m</Unit>
          </Row>
        </Row>
        <Row $mt={9}>
          <Label htmlFor="rowsp" $w={73}>row space:</Label>
          <Row $gap={5}>
            <TextBox id="rowsp" $w={69} $h={30} $small $align="center" defaultValue="3,0" />
            <Unit>m</Unit>
          </Row>
        </Row>
        <Row $mt={18}>
          <Label htmlFor="soil" $w={73}>soil class:</Label>
          <Select id="soil" value="Ib" w={118} small />
          <Label htmlFor="ccoat" $w={86}>coating:</Label>
          <Select id="ccoat" value="HDG85" w={175} small />
          <Label htmlFor="edv" $w={112}>ED values:</Label>
          <Row $gap={0}>
            <Caption $w={4} />
            <Select id="edv" value="indicative" w={148} small />
          </Row>
        </Row>
        <PileTable>
          <colgroup>
            {[107, 87, 106, 145, 87, 145, 80].map((w, i) => (
              <col key={i} width={w} />
            ))}
          </colgroup>
          <TableHead>
            <tr>
              <th>type</th>
              <th>quantity</th>
              <th>piles / table</th>
              <th colSpan={2}>Foundation front</th>
              <th colSpan={2}>Foundation rear</th>
            </tr>
          </TableHead>
          <tbody>
            {piles.map(([type, qty, n, front, fl, rear, rl], i) => (
              <tr key={type}>
                <td><TextBox aria-label={`type ${i + 1}`} $w={99} $small defaultValue={type} /></td>
                <td><TextBox aria-label={`quantity ${i + 1}`} $w={74} $small $pad={18} $align="right" defaultValue={qty} /></td>
                <td><TextBox aria-label={`piles ${i + 1}`} $w={98} $small $pad={18} $align="right" defaultValue={n} /></td>
                <td>{front && <Select name="foundation front" value={front} w={137} small />}</td>
                <td><TextBox aria-label={`front length ${i + 1}`} $w={79} $small $align="center" defaultValue={fl} /></td>
                <td>{rear && <Select name="foundation rear" value={rear} w={137} small />}</td>
                <td><TextBox aria-label={`rear length ${i + 1}`} $w={80} $small $align="center" defaultValue={rl} /></td>
              </tr>
            ))}
          </tbody>
        </PileTable>
        <Row $gap={0} $align="flex-start">
          <Summary>
            <label htmlFor="smod">modules:</label>
            <label htmlFor="stab">tables:</label>
            <label htmlFor="spil">piles:</label>
            <TextBox id="smod" $w={99} $h={30} $small $align="center" defaultValue="31.368" />
            <TextBox id="stab" $w={74} $h={30} $small $align="center" defaultValue="850" />
            <TextBox id="spil" $w={98} $h={30} $small $align="center" defaultValue="17.808" />
            <SummaryRates>{"788  piles/MWp\n1,76  Mod./pile"}</SummaryRates>
          </Summary>
          <Row $gap={9} $mt={5} $align="flex-start">
            <DrawerNotesLabel htmlFor="cnotes" $dark $w={76}>notes:</DrawerNotesLabel>
            <Area id="cnotes" $w={234} $h={90} />
          </Row>
        </Row>
      </DrawerForm>
    </DrawerBody>
  </Drawer>
);

export default function App() {
  return (
    <Page>
      <GlobalStyle />
      <TopBar>
        <PageTitle>Project Details</PageTitle>
      </TopBar>
      <Shell>
        <Side aria-label="main">
          <SideGroup>
            <SideItems names={["home", "laptop", "notebook", "chart", "share", "robot", "bulb"]} />
          </SideGroup>
          <SideSpace $grow={178} />
          <SideGroup>
            <SideRule />
            <SideItems names={["save", "copy"]} />
            <SideRule $full />
            <SideItems names={["mail"]} />
          </SideGroup>
          <SideSpace $grow={144} />
          <SideGroup>
            <SideRule />
            <SideItems names={["people", "layers", "eye"]} />
          </SideGroup>
          <SideSpace $grow={123} />
        </Side>
        <Main>
          <HeadLine>
            <HeadLeft>
              <HeadBox $w={50} aria-label="country" defaultValue="DE" $align="center" />
              <HeadBox $w={282} aria-label="project name" defaultValue="Testprojekt" />
              <PartButton $w={98} $h={41}>Part 1</PartButton>
              <HeadFigures>
                <HeadFigure $w={239} $dark>22,58  MWp</HeadFigure>
                <HeadFigure $w={446}>ID: 260223.00</HeadFigure>
                <HeadFigure $w={76}>ST MAC</HeadFigure>
              </HeadFigures>
            </HeadLeft>
            <Tools>
              <ToolItems w={427} names={["doc", "people", "building", "tools", "joystick", "robot", "notebook", "bug", "scroll"]} />
              <ToolItems w={185} names={["mail", "calc", "folder", "eraser"]} />
            </Tools>
          </HeadLine>
          <Columns>
            <Stack>
              <Split $cols="514fr 988fr">
                <CustomerPanel />
                <QuotePanel />
              </Split>
              <Split $cols="901fr 601fr" $grow>
                <Stack>
                  <SitePanel />
                  <Split $cols="601fr 291fr" $grow>
                    <ModulesPanel />
                    <InverterPanel />
                  </Split>
                </Stack>
                <Stack>
                  <StatusPanel />
                  <UploadPanel />
                </Stack>
              </Split>
            </Stack>
            <Configuration />
          </Columns>
          <Footer>
            <span>(c) 2022-2026 Raylant GmbH, Release: 1.7.050&nbsp; -&nbsp; 08.07.2026</span>
            <FooterId>ID: 260223</FooterId>
            <FooterUser>Project Administration Platform - User: Karsten Weltzien</FooterUser>
          </Footer>
        </Main>
      </Shell>
    </Page>
  );
}
